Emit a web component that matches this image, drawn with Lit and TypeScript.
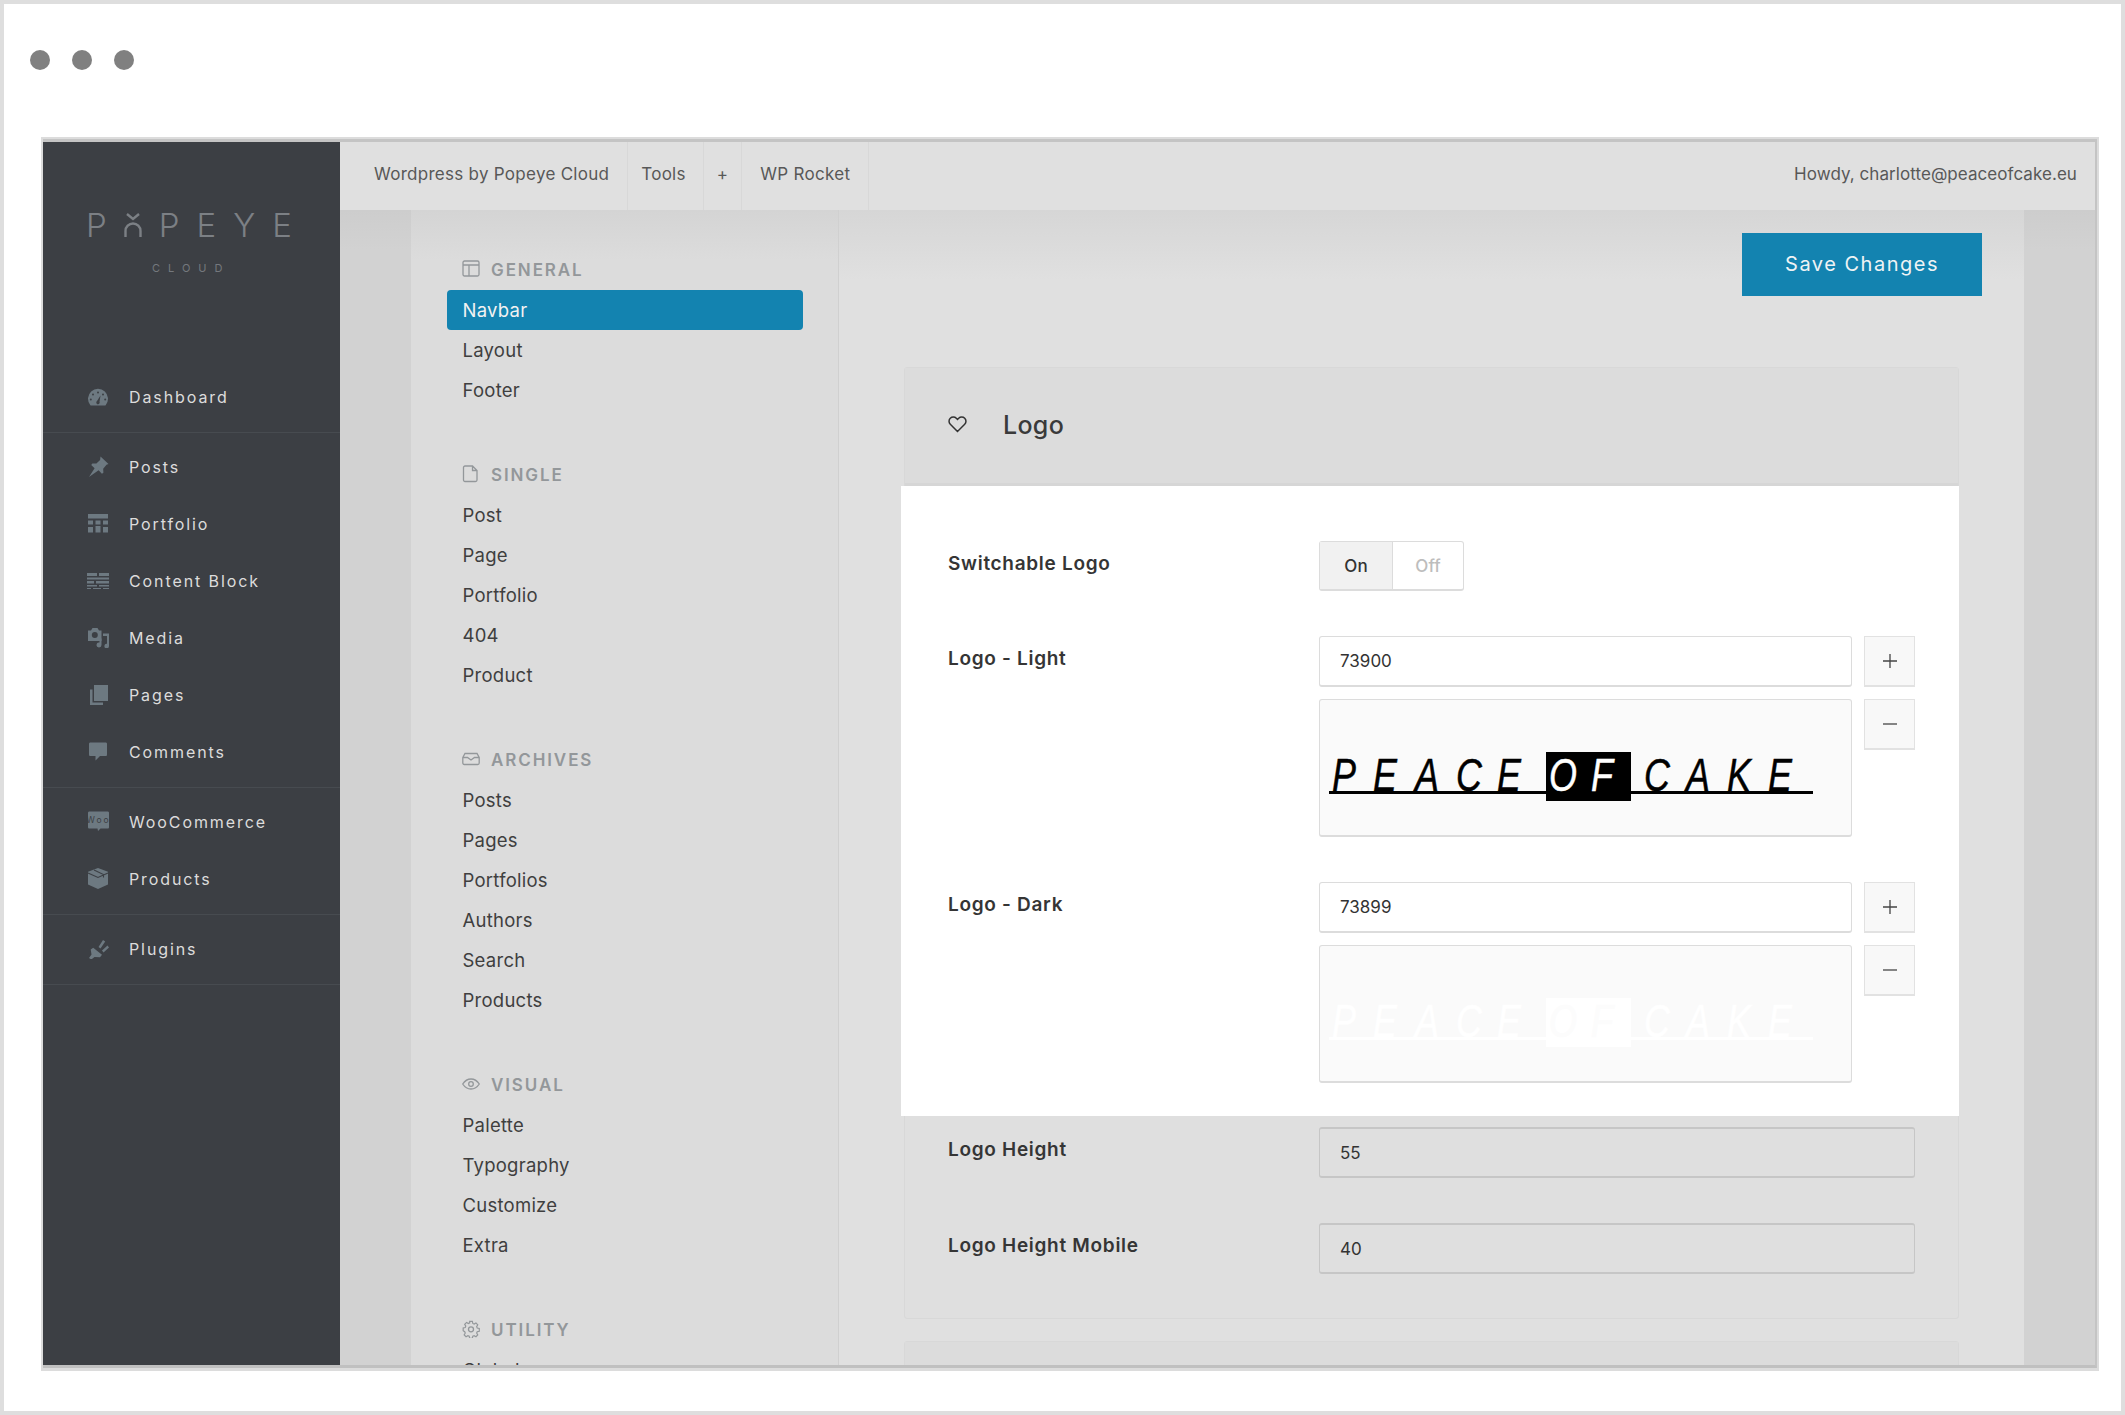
import { LitElement, html, css, svg } from 'lit';
import { customElement } from 'lit/decorators.js';

const SIDE_ICONS: Record<string, unknown> = {
  gauge: svg`<path d="M3.200 20a10 10 0 1 1 15.600 0c-.3.4-.6.500-1 .500H4.200c-.4 0-.7-.1-1-.5z" fill="#6d7981"/><g fill="#3c3f44"><circle cx="3.800" cy="14.500" r="1"/><circle cx="6" cy="9.500" r="1"/><circle cx="11" cy="7.400" r="1"/><circle cx="16" cy="9.500" r="1"/><circle cx="18.200" cy="14.500" r="1"/><path d="M13.500 10.500l-1 6.200a1.700 1.700 0 1 1-2.500-.6z"/></g>`,
  pin: svg`<path d="M13.500 1.500l8 7.500-2 .7-3.300 4 .2 4-1.500 1-3.300-3.400L2 22l5.600-8.800-3.400-3.200 1.200-1.500 4 .1 3.700-3.600z" fill="#6d7981"/>`,
  grid: svg`<path d="M1 2h20v4.500H1zM1 8.500h5v4H1zM8.500 8.500h5v4h-5zM16 8.500h5v4h-5zM1 15h5v5.500H1zM8.500 14h5v6.500h-5zM16 15h5v5.500h-5z" fill="#6d7981"/>`,
  block: svg`<path d="M0 4h10v3H0zM12 4h10v3H12zM0 8.500h22v2H0zM0 12h7v2.500H0zM9 12h13v2.500H9zM0 16h10v1.500H0zM12 16h10v1.500H12zM0 19h4v1H0zM6 19h8v1H6zM16 19h6v1H16z" fill="#6d7981"/>`,
  media: svg`<path d="M1 4.500h3l1.500-2.500h5l1.500 2.500h2.500v10.500H1z" fill="#6d7981"/><circle cx="7.800" cy="9" r="3" fill="#3c3f44"/><path d="M16 7.500h6v12.500a2.300 2.300 0 1 1-2-2.300V10h-4zM12.500 12.500h2v6.500a2.500 2.500 0 1 1-2-2.400z" fill="#6d7981"/>`,
  pages: svg`<path d="M7 2h14v16H7z" fill="#6d7981"/><path d="M3 6.500h2.500V19.500H16V22H3z" fill="#6d7981"/>`,
  comment: svg`<path d="M3.500 2.500h15c1 0 1.500.5 1.500 1.500v10.500c0 1-.5 1.500-1.500 1.500h-5.500l-4.500 4.500V16H3.500C2.500 16 2 15.500 2 14.500V4c0-1 .5-1.500 1.500-1.500z" fill="#6d7981"/>`,
  woo: svg`<path d="M2.500 1.500h18c1 0 1.500.5 1.500 1.500v14c0 1-.5 1.500-1.500 1.500h-7l-2.500 2.500-.5-2.500h-8c-1 0-1.500-.5-1.500-1.500V3c0-1 .5-1.500 1.500-1.500z" fill="#6d7981"/><text x="11.500" y="13" font-size="8.500" text-anchor="middle" fill="#3c3f44" font-family="Inter, sans-serif">Woo</text>`,
  box: svg`<path d="M11 1l10 3.800v12.700l-10 4.500-10-4.500V4.800z" fill="#6d7981"/><path d="M1 6l10 4.500 10-4.500M7 3l9.500 4.500v3" fill="none" stroke="#3c3f44" stroke-width="1.100"/>`,
  plug: svg`<path d="M2 21l2.500-3.500-.8-5 2.500-1.800 8.800 7-2 2.500-5.500-.2-3.200 2.500zM11.500 10l4.500-7 2.200 1.500-4.700 7zM15 13.500l5.500-5 1.500 2-5.500 5z" fill="#6d7981"/>`,
};

const SIDE_GROUPS = [
  [['gauge', 'Dashboard']],
  [
    ['pin', 'Posts'],
    ['grid', 'Portfolio'],
    ['block', 'Content Block'],
    ['media', 'Media'],
    ['pages', 'Pages'],
    ['comment', 'Comments'],
  ],
  [
    ['woo', 'WooCommerce'],
    ['box', 'Products'],
  ],
  [['plug', 'Plugins']],
];

const NAV_ICONS: Record<string, unknown> = {
  layout: svg`<rect x="1" y="1" width="16" height="15" rx="1.500"/><path d="M1 5h16M7 5v11"/>`,
  file: svg`<path d="M3 1h7.500L15 5.500V15a1.500 1.500 0 0 1-1.500 1.500h-10.500A1.500 1.500 0 0 1 1.500 15V2.500A1.500 1.500 0 0 1 3 1zM10.500 1v4.500H15"/>`,
  inbox: svg`<path d="M.8 7.500L3 3.500h12l2.200 4v5.500a1.500 1.500 0 0 1-1.500 1.500H2.300A1.500 1.500 0 0 1 .8 13zM.8 7.500H5.500l3.500 2.500 3.500-2.500h4.700"/>`,
  eye: svg`<path d="M.7 9C3 5.500 6 4 9 4s6 1.500 8.300 5C15 12.500 12 14 9 14S3 12.500.7 9z"/><circle cx="9" cy="9" r="2.300"/>`,
  gear: svg`<path d="M7.500 1.500h3l.5 2.300 1.500.7 2-1.200 2 2.100-1.200 2 .6 1.500 2.300.6v3l-2.300.5-.6 1.500 1.200 2-2 2.100-2-1.200-1.500.6-.5 2.300h-3l-.5-2.300-1.500-.6-2 1.200-2.100-2.100 1.200-2-.6-1.500L.3 11.800v-3l2.300-.5.6-1.500-1.200-2 2.100-2.100 2 1.200 1.500-.7z" transform="scale(.9) translate(1 0)"/><circle cx="9" cy="9.300" r="2.500"/>`,
};

const NAV_GROUPS: { icon: string; title: string; items: string[] }[] = [
  { icon: 'layout', title: 'GENERAL', items: ['Navbar', 'Layout', 'Footer'] },
  { icon: 'file', title: 'SINGLE', items: ['Post', 'Page', 'Portfolio', '404', 'Product'] },
  { icon: 'inbox', title: 'ARCHIVES', items: ['Posts', 'Pages', 'Portfolios', 'Authors', 'Search', 'Products'] },
  { icon: 'eye', title: 'VISUAL', items: ['Palette', 'Typography', 'Customize', 'Extra'] },
  { icon: 'gear', title: 'UTILITY', items: ['Global'] },
];

@customElement('app-root')
export class AppRoot extends LitElement {
  static styles = css`
    :host {
      display: block;
      width: 2125px;
      height: 1415px;
      box-sizing: border-box;
      border: 4px solid #dedede;
      background: #fff;
      overflow: hidden;
      font-family: Inter, 'Liberation Sans', sans-serif;
      color: #3c3c3c;
    }

    .dots {
      display: flex;
      gap: 22px;
      padding: 46px 0 0 26px;
    }

    .dots span {
      width: 20px;
      height: 20px;
      border-radius: 50%;
      background: #808080;
    }

    .frame {
      box-sizing: border-box;
      width: 2058px;
      height: 1234px;
      margin: 67px 0 0 37px;
      border: 2px solid #dcdcdc;
      border-bottom-width: 3px;
    }

    .shell {
      box-sizing: border-box;
      height: 100%;
      display: flex;
      overflow: hidden;
      border-top: 3px solid #c4c4c4;
      border-right: 2px solid #c4c4c4;
      border-bottom: 3px solid #c0c0c0;
    }

    .sidebar {
      flex: 0 0 297px;
      background: #3c3f44;
      color: #dcdcdc;
    }

    .brand {
      box-sizing: border-box;
      height: 221px;
      padding: 70px 0 0 43px;
    }

    .wordmark {
      width: 206px;
      display: flex;
      justify-content: space-between;
      align-items: center;
      height: 26px;
      font-size: 33px;
      font-weight: 300;
      color: #7c8085;
    }

    .wordmark svg {
      display: block;
    }

    .sub {
      margin: 24px 0 0 66px;
      font-size: 11px;
      line-height: 12px;
      letter-spacing: 8px;
      color: #74787d;
    }

    .side-group {
      padding: 6px 0;
      border-bottom: 1px solid #474b50;
    }

    .side-item {
      height: 57px;
      display: flex;
      align-items: center;
      gap: 20px;
      padding-left: 44px;
      font-size: 16px;
      letter-spacing: 1.900px;
    }

    .side-item span {
      padding-bottom: 2px;
    }

    .side-item svg {
      flex: none;
      margin-top: -3px;
    }

    .main {
      flex: 1;
      min-width: 0;
      display: flex;
      flex-direction: column;
    }

    .topbar {
      flex: 0 0 68px;
      display: flex;
      align-items: stretch;
      background: #e0e0e0;
      font-size: 17px;
      letter-spacing: 0.280px;
      color: #585858;
    }

    .topbar a {
      display: flex;
      align-items: center;
      padding: 0 18px 4px;
      border-right: 1px solid #d8d8d8;
    }

    .topbar a.first {
      padding-left: 34px;
    }

    .topbar a.tools {
      padding: 0 17px 4px 13px;
    }

    .topbar a.plus {
      padding: 0 13px 4px;
    }

    .howdy {
      margin-left: auto;
      padding: 0 18px 4px 0;
      align-self: center;
      letter-spacing: 0.060px;
    }

    .body {
      flex: 1;
      min-height: 0;
      display: flex;
      background: #d2d2d2;
    }

    .gutter {
      background-image: linear-gradient(#cdcdcd, #d2d2d2 40px);
    }

    .gutter.left {
      flex: 0 0 71px;
    }

    .gutter.right {
      flex: 0 0 71px;
    }

    .nav {
      box-sizing: border-box;
      flex: 0 0 428px;
      padding: 44px 35px 0 36px;
      background-image: linear-gradient(#d4d4d4, #dcdcdc 50px);
      border-right: 1px solid #d0d0d0;
    }

    .nav-group {
      margin-bottom: 49px;
    }

    .nav-head {
      height: 30px;
      margin-bottom: 6px;
      display: flex;
      align-items: center;
      gap: 11px;
      padding-left: 15px;
      font-size: 17px;
      font-weight: 600;
      letter-spacing: 1.900px;
      color: #93979a;
    }

    .nav-head span {
      padding-top: 1px;
    }

    .nav-head svg {
      flex: none;
      fill: none;
      stroke: #93979a;
      stroke-width: 1.300;
    }

    .nav-item {
      height: 40px;
      display: flex;
      align-items: center;
      padding-left: 15.500px;
      border-radius: 4px;
      font-size: 18.500px;
      letter-spacing: 0.250px;
      color: #3f3f3f;
    }

    .nav-item.active {
      background: #1383b0;
      color: #f2f2f2;
    }

    .content {
      flex: 1;
      min-width: 0;
      box-sizing: border-box;
      padding: 23px 42px 0 65px;
      background-image: linear-gradient(#d6d6d6, #e0e0e0 70px);
    }

    .save-row {
      display: flex;
      justify-content: flex-end;
      margin-bottom: 71px;
    }

    .save {
      box-sizing: border-box;
      width: 240px;
      height: 63px;
      padding-bottom: 2px;
      display: flex;
      align-items: center;
      justify-content: center;
      background: #1383b0;
      color: #eef3f5;
      font-size: 20px;
      letter-spacing: 1.500px;
    }

    .card {
      box-sizing: border-box;
      width: 1055px;
      margin-bottom: 22px;
      border: 1px solid #d8d8d8;
      border-radius: 3px;
      background: #dfdfdf;
    }

    .card-head {
      box-sizing: border-box;
      height: 118px;
      display: flex;
      align-items: center;
      gap: 36px;
      padding: 0 0 2px 43px;
      background: #dcdcdc;
      border-bottom: 3px solid #d6d6d6;
      font-size: 25px;
      font-weight: 500;
      letter-spacing: 0.300px;
      color: #3a3a3a;
    }

    .card-head svg {
      fill: none;
      stroke: #333;
      stroke-width: 1.500;
    }

    .hilite {
      margin: 0 -1px 0 -4px;
      padding: 55px 45px 33px 46px;
      background: #fff;
      display: flex;
      flex-direction: column;
      gap: 45px;
    }

    .rest {
      padding: 11px 43px 44px 42px;
      display: flex;
      flex-direction: column;
      gap: 45px;
    }

    .row {
      display: grid;
      grid-template-columns: 372px 596px;
    }

    .label {
      padding: 11px 0 0 1px;
      font-size: 19px;
      line-height: 24px;
      font-weight: 600;
      letter-spacing: 0.700px;
      color: #353535;
    }

    .toggle {
      width: 145px;
      height: 50px;
      box-sizing: border-box;
      display: flex;
      border: 1px solid #dcdcdc;
      border-bottom-width: 2px;
      border-radius: 3px;
      font-size: 17px;
      font-weight: 500;
    }

    .toggle span {
      flex: 1;
      display: flex;
      align-items: center;
      justify-content: center;
      color: #bdbdbd;
    }

    .toggle span.on {
      flex: 0 0 72px;
      background: #f1f1f1;
      border-right: 1px solid #dcdcdc;
      color: #333;
    }

    .media-field {
      display: grid;
      grid-template-columns: 533px 51px;
      gap: 12px;
      align-items: start;
    }

    input {
      box-sizing: border-box;
      width: 100%;
      height: 51px;
      padding: 0 20px;
      border: 1px solid #dcdcdc;
      border-bottom-width: 2px;
      border-radius: 3px;
      background: #fff;
      font: 17px Inter, 'Liberation Sans', sans-serif;
      color: #333;
      outline: none;
    }

    input.muted {
      background: #dfdfdf;
      border-color: #c6c6c6;
      border-top-width: 2px;
    }

    .step {
      box-sizing: border-box;
      height: 51px;
      display: flex;
      align-items: center;
      justify-content: center;
      background: #f8f8f8;
      border: 1px solid #e2e2e2;
      border-bottom-width: 2px;
    }

    .preview {
      box-sizing: border-box;
      height: 138px;
      padding: 54px 0 0 9px;
      background: #fafafa;
      border: 1px solid #dcdcdc;
      border-bottom-width: 2px;
      border-radius: 3px;
    }

    .peace {
      width: 484px;
      height: 34px;
      padding-top: 3px;
      display: flex;
      border-bottom: 3px solid #000;
      color: #000;
      font: italic 46px/37px 'Liberation Sans', sans-serif;
      -webkit-text-stroke: 0.5px currentColor;
    }

    .peace span {
      display: block;
      width: 41.300px;
      padding-left: 4px;
      box-sizing: border-box;
      transform: scaleX(0.78);
      transform-origin: left;
    }

    .peace b {
      flex: none;
      width: 85px;
      height: 49px;
      margin: -5px 10px 0 11px;
      padding-top: 5px;
      box-sizing: border-box;
      display: flex;
      background: #000;
      color: #fff;
      font-weight: 400;
    }

    .peace.ghost {
      border-color: #fff;
      color: #fff;
    }

    .peace.ghost b {
      background: #fff;
      color: #fcfcfc;
    }
  `;

  private logoPreview(ghost = false) {
    const letters = (s: string) => [...s].map((c) => html`<span>${c}</span>`);
    return html`
      <div class="preview">
        <div class="peace ${ghost ? 'ghost' : ''}">
          ${letters('PEACE')}<b>${letters('OF')}</b>${letters('CAKE')}
        </div>
      </div>
    `;
  }

  private step(minus = false) {
    return html`
      <div class="step">
        <svg width="16" height="16" viewBox="0 0 16 16" fill="none" stroke="#444" stroke-width="1.300">
          <path d=${minus ? 'M1 8h14' : 'M1 8h14M8 1v14'}></path>
        </svg>
      </div>
    `;
  }

  private mediaRow(label: string, value: string, ghost: boolean) {
    return html`
      <div class="row">
        <div class="label">${label}</div>
        <div class="media-field">
          <input .value=${value} />
          ${this.step()}
          ${this.logoPreview(ghost)}
          ${this.step(true)}
        </div>
      </div>
    `;
  }

  render() {
    return html`
      <div class="dots"><span></span><span></span><span></span></div>
      <div class="frame">
        <div class="shell">
          <aside class="sidebar">
            <div class="brand">
              <div class="wordmark">
                <span>P</span>
                <svg width="18" height="24" viewBox="0 0 18 24" fill="none" stroke="#7c8085" stroke-width="2.400">
                  <path d="M1.500 24v-6a7.500 7.500 0 0 1 15 0v6M3 1l6 5 6-5"></path>
                </svg>
                <span>P</span><span>E</span><span>Y</span><span>E</span>
              </div>
              <div class="sub">CLOUD</div>
            </div>
            ${SIDE_GROUPS.map(
              (group) => html`
                <div class="side-group">
                  ${group.map(
                    ([icon, label]) => html`
                      <div class="side-item">
                        <svg width="22" height="22" viewBox="0 0 22 22">${SIDE_ICONS[icon]}</svg>
                        <span>${label}</span>
                      </div>
                    `
                  )}
                </div>
              `
            )}
          </aside>
          <div class="main">
            <div class="topbar">
              <a class="first">Wordpress by Popeye Cloud</a>
              <a class="tools">Tools</a>
              <a class="plus">+</a>
              <a>WP Rocket</a>
              <div class="howdy">Howdy, charlotte@peaceofcake.eu</div>
            </div>
            <div class="body">
              <div class="gutter left"></div>
              <nav class="nav">
                ${NAV_GROUPS.map(
                  (group) => html`
                    <div class="nav-group">
                      <div class="nav-head">
                        <svg width="18" height="18" viewBox="0 0 18 18">${NAV_ICONS[group.icon]}</svg>
                        <span>${group.title}</span>
                      </div>
                      ${group.items.map(
                        (item) => html`<div class="nav-item ${item === 'Navbar' ? 'active' : ''}">${item}</div>`
                      )}
                    </div>
                  `
                )}
              </nav>
              <main class="content">
                <div class="save-row"><div class="save">Save Changes</div></div>
                <section class="card">
                  <div class="card-head">
                    <svg width="19" height="17" viewBox="0 0 19 17">
                      <path d="M9.500 15.500L2.300 8.300a4.200 4.200 0 0 1 0-6 4.200 4.200 0 0 1 6 0l1.200 1.200 1.200-1.200a4.200 4.200 0 0 1 6 0 4.200 4.200 0 0 1 0 6z"></path>
                    </svg>
                    <span>Logo</span>
                  </div>
                  <div class="hilite">
                    <div class="row">
                      <div class="label">Switchable Logo</div>
                      <div class="toggle"><span class="on">On</span><span>Off</span></div>
                    </div>
                    ${this.mediaRow('Logo - Light', '73900', false)}
                    ${this.mediaRow('Logo - Dark', '73899', true)}
                  </div>
                  <div class="rest">
                    <div class="row">
                      <div class="label">Logo Height</div>
                      <input class="muted" .value=${'55'} />
                    </div>
                    <div class="row">
                      <div class="label">Logo Height Mobile</div>
                      <input class="muted" .value=${'40'} />
                    </div>
                  </div>
                </section>
                <section class="card">
                  <div class="card-head"></div>
                </section>
              </main>
              <div class="gutter right"></div>
            </div>
          </div>
        </div>
      </div>
    `;
  }
}
